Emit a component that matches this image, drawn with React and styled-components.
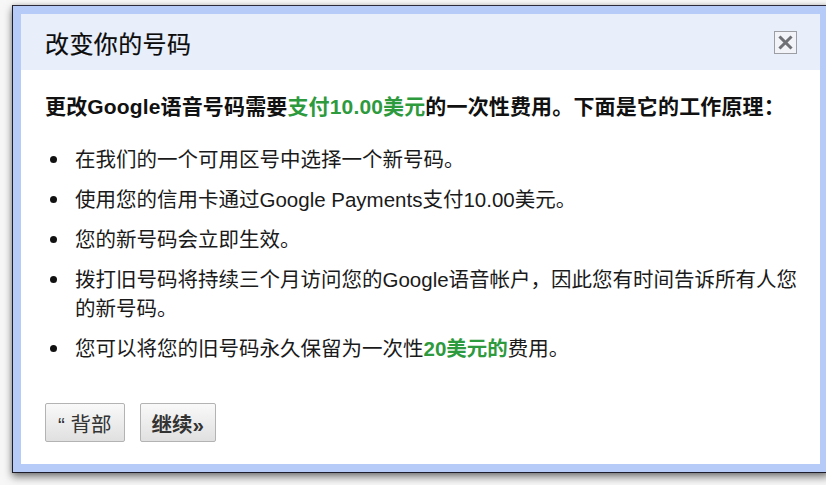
import React from "react";
import styled, { createGlobalStyle } from "styled-components";

const Global = createGlobalStyle`
  html, body { margin: 0; padding: 0; background: #f7f7f7; overflow: hidden; }
  body { font-family: "Liberation Sans", "Noto Sans CJK SC", sans-serif; color: #111; }
`;

const Page = styled.div`
  padding: 5px 0 0 12px;
  width: 826px;
  height: 485px;
  box-sizing: border-box;
`;

const Dialog = styled.div`
  width: 817px;
  box-sizing: border-box;
  border: 1px solid #1d1d2b;
  border-top-color: #2a2a3a;
  background: #b7cbf8;
  padding: 8px;
  box-shadow: 0 4px 8px rgba(0, 0, 0, 0.5), 0 0 4px rgba(0, 0, 0, 0.15);
`;

const Inner = styled.div`
  background: #fff;
`;

const Header = styled.div`
  height: 56px;
  background: #e8eefa;
  display: flex;
  align-items: center;
  justify-content: space-between;
  padding: 0 23px 0 24px;
`;

const Title = styled.h1`
  margin: 0;
  font-size: 24px;
  font-weight: normal;
  color: #0c0c0c;
  letter-spacing: 0.4px;
  -webkit-text-stroke: 0.2px #0c0c0c;
`;

const CloseBox = styled.button`
  width: 23px;
  height: 23px;
  padding: 0;
  border: 1px solid #9c9ea4;
  background: #f1f3f8;
  display: flex;
  align-items: center;
  justify-content: center;
  cursor: pointer;
`;

const Body = styled.div`
  padding: 22px 16px 22px 24px;
`;

const Lead = styled.p`
  margin: 0;
  font-size: 21px;
  line-height: 29px;
  font-weight: bold;
  letter-spacing: 0.15px;
  color: #111;
`;

const Green = styled.span`
  color: #2e9a3e;
  font-weight: bold;
`;

const List = styled.ul`
  list-style: none;
  margin: 24px 0 0 0;
  padding: 0;
`;

const Item = styled.li`
  position: relative;
  padding-left: 30px;
  font-size: 20.5px;
  line-height: 29px;
  color: #1a1a1a;
  margin-bottom: 11px;
  &:last-child {
    margin-bottom: 0;
  }
  &::before {
    content: "";
    position: absolute;
    left: 5px;
    top: 11px;
    width: 7px;
    height: 7px;
    border-radius: 50%;
    background: #111;
  }
`;

const Actions = styled.div`
  display: flex;
  gap: 15px;
  margin-top: 40px;
`;

const Btn = styled.button`
  height: 39px;
  padding: 0 ${(p) => (p.$primary ? "11px" : "12px")};
  border: 1px solid #b3b3b3;
  border-radius: 2px;
  background: linear-gradient(#f9f9f9, #e0e0e0);
  font-family: "Liberation Sans", "Noto Sans CJK SC", sans-serif;
  font-size: 20.5px;
  font-weight: ${(p) => (p.$primary ? "bold" : "normal")};
  color: #333;
  cursor: pointer;
`;

export default function App() {
  return (
    <>
      <Global />
      <Page>
        <Dialog>
          <Inner>
            <Header>
              <Title>改变你的号码</Title>
              <CloseBox aria-label="close">
                <svg width="15" height="15" viewBox="0 0 15 15">
                  <path d="M2.5 2.5 L12.5 12.5 M12.5 2.5 L2.5 12.5" stroke="#6e7076" strokeWidth="3" strokeLinecap="square" />
                </svg>
              </CloseBox>
            </Header>
            <Body>
              <Lead>
                更改Google语音号码需要<Green>支付10.00美元</Green>的一次性费用。下面是它的工作原理：
              </Lead>
              <List>
                <Item>在我们的一个可用区号中选择一个新号码。</Item>
                <Item>使用您的信用卡通过Google Payments支付10.00美元。</Item>
                <Item>您的新号码会立即生效。</Item>
                <Item>拨打旧号码将持续三个月访问您的Google语音帐户，因此您有时间告诉所有人您的新号码。</Item>
                <Item>
                  您可以将您的旧号码永久保留为一次性<Green>20美元的</Green>费用。
                </Item>
              </List>
              <Actions>
                <Btn>“ 背部</Btn>
                <Btn $primary>继续»</Btn>
              </Actions>
            </Body>
          </Inner>
        </Dialog>
      </Page>
    </>
  );
}
